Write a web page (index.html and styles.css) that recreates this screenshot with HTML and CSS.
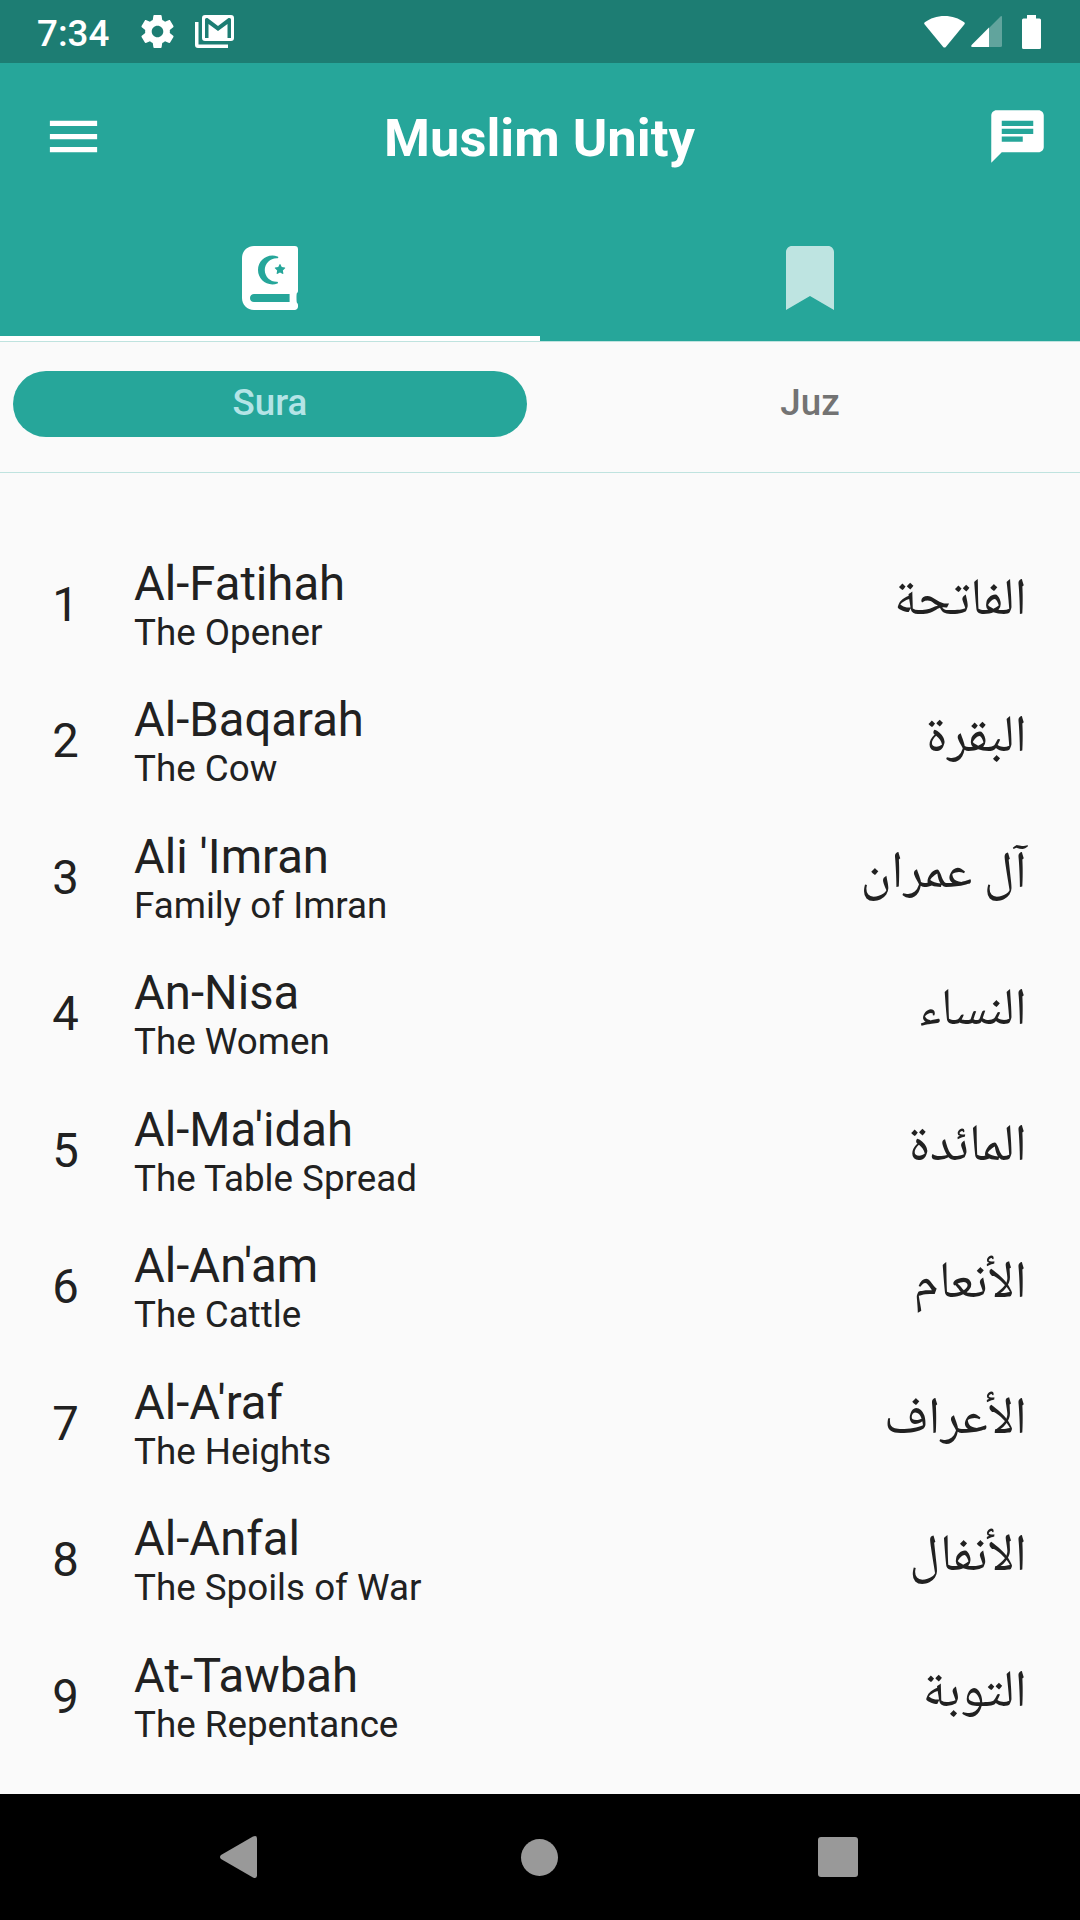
FILE: index.html
```html
<!DOCTYPE html>
<html lang="en">
<head>
    <meta charset="UTF-8">
    <meta name="viewport" content="width=device-width, initial-scale=1.0">
    <title>Muslim Unity</title>
    <link rel="stylesheet" href="styles.css">
</head>
<body>
    <div class="status-bar">
        <span class="time">7:34</span>
        <svg class="gear" viewBox="2 2 20 20"><path d="M19.43 12.98c.04-.32.07-.64.07-.98s-.03-.66-.07-.98l2.11-1.65c.19-.15.24-.42.12-.64l-2-3.46c-.12-.22-.39-.3-.61-.22l-2.49 1c-.52-.4-1.08-.73-1.69-.98l-.38-2.65C14.46 2.18 14.25 2 14 2h-4c-.25 0-.46.18-.49.42l-.38 2.65c-.61.25-1.17.59-1.69.98l-2.49-1c-.23-.09-.49 0-.61.22l-2 3.46c-.13.22-.07.49.12.64l2.11 1.65c-.04.32-.07.65-.07.98s.03.66.07.98l-2.11 1.65c-.19.15-.24.42-.12.64l2 3.46c.12.22.39.3.61.22l2.49-1c.52.4 1.08.73 1.69.98l.38 2.65c.03.24.24.42.49.42h4c.25 0 .46-.18.49-.42l.38-2.65c.61-.25 1.17-.59 1.69-.98l2.49 1c.23.09.49 0 .61-.22l2-3.46c.12-.22.07-.49-.12-.64l-2.11-1.65zM12 15.5c-1.93 0-3.5-1.57-3.5-3.5s1.57-3.5 3.5-3.5 3.5 1.57 3.5 3.5-1.57 3.5-3.5 3.5z"/></svg>
        <svg class="mail" viewBox="0 0 39 33">
            <path fill-rule="evenodd" d="M10 0h26a3 3 0 0 1 3 3v20a3 3 0 0 1-3 3H10a3 3 0 0 1-3-3V3a3 3 0 0 1 3-3zM10 4.500V23h3.500V9l9.500 7 9.500-7v14H36V4.500q0-1.500-1.500-1.500h-1L23 11 12.500 3h-1Q10 3 10 4.500z"/>
            <path d="M0 7h3.500v22.500H33V33H3a3 3 0 0 1-3-3z"/>
        </svg>
        <div class="status-right">
            <svg class="wifi" viewBox="0 0 41 32"><path d="M.8 6.300C6 2.300 13 0 20.500 0S35 2.300 40.200 6.300q1 .9.300 2L22 30.700q-1.500 1.700-3 0L.5 8.300q-.7-1.100.3-2z"/></svg>
            <svg class="signal" viewBox="0 0 31 31">
                <path class="dim" d="M18 12 29.500.5Q31-.5 31 1v28.500Q31 31 29.500 31H18z"/>
                <path d="M18 11.500V31H1.500Q-.7 31 .6 29z"/>
            </svg>
            <svg class="battery" viewBox="0 0 19 34"><path d="M5 0h9v3.500h3.500A1.500 1.500 0 0 1 19 5v27.500a1.500 1.500 0 0 1-1.500 1.500h-16A1.500 1.500 0 0 1 0 32.500V5a1.500 1.500 0 0 1 1.500-1.500H5z"/></svg>
        </div>
    </div>
    <header class="app-bar">
        <svg class="icon" viewBox="0 0 24 24"><path d="M3 18h18v-2H3v2zm0-5h18v-2H3v2zm0-7v2h18V6H3z"/></svg>
        <h1 class="title">Muslim Unity</h1>
        <svg class="icon" viewBox="0 0 24 24"><path d="M20 2H4c-1.100 0-1.990.9-1.990 2L2 22l4-4h14c1.100 0 2-.9 2-2V4c0-1.100-.9-2-2-2zM6 9h12v2H6V9zm8 5H6v-2h8v2zm4-6H6V6h12v2z"/></svg>
    </header>
    <nav class="tabs">
        <div class="tab active">
            <svg class="book" viewBox="0 0 448 512"><path d="M448 358.400V25.600c0-16-9.600-25.600-25.600-25.600H96C41.600 0 0 41.600 0 96v320c0 54.400 41.600 96 96 96h326.400c12.800 0 25.600-9.600 25.600-25.600v-16c0-6.400-3.200-12.800-9.600-19.200-3.200-16-3.200-60.800 0-73.600 6.400-3.200 9.600-9.600 9.600-19.200zM301.080 145.820c.6-1.210 1.760-1.820 2.920-1.820s2.320.61 2.920 1.820l11.180 22.650 25 3.630c2.670.39 3.740 3.670 1.810 5.560l-18.090 17.630 4.270 24.890c.36 2.110-1.310 3.820-3.210 3.820-.5 0-1.020-.12-1.520-.38L304 211.870l-22.360 11.750c-.5.26-1.020.38-1.520.38-1.900 0-3.570-1.710-3.210-3.820l4.270-24.890-18.090-17.630c-1.940-1.890-.87-5.170 1.810-5.560l24.990-3.630 11.190-22.650zm-57.890-69.010c13.670 0 27.260 2.490 40.380 7.410a6.775 6.775 0 1 1-2.380 13.120c-.67 0-3.090-.21-4.130-.21-52.310 0-94.860 42.550-94.860 94.860 0 52.300 42.550 94.860 94.860 94.860 1.030 0 3.480-.21 4.130-.21 3.930 0 6.800 3.140 6.800 6.780 0 2.980-1.940 5.510-4.620 6.420-13.070 4.870-26.590 7.340-40.190 7.340C179.670 307.190 128 255.510 128 192c0-63.520 51.670-115.190 115.190-115.190zM380.800 448H96c-19.200 0-32-12.800-32-32s16-32 32-32h284.800v64z"/></svg>
        </div>
        <div class="tab">
            <svg class="bookmark" viewBox="0 0 384 512"><path d="M0 512V48C0 21.490 21.490 0 48 0h288c26.510 0 48 21.490 48 48v464L192 400 0 512z"/></svg>
        </div>
    </nav>
    <div class="switch">
        <div class="option selected">Sura</div>
        <div class="option">Juz</div>
    </div>
    <main class="list">
        <div class="row">
            <span class="number">1</span>
            <div class="names"><p class="name">Al-Fatihah</p><p class="meaning">The Opener</p></div>
            <span class="arabic" lang="ar" dir="rtl">الفاتحة</span>
        </div>
        <div class="row">
            <span class="number">2</span>
            <div class="names"><p class="name">Al-Baqarah</p><p class="meaning">The Cow</p></div>
            <span class="arabic" lang="ar" dir="rtl">البقرة</span>
        </div>
        <div class="row">
            <span class="number">3</span>
            <div class="names"><p class="name">Ali 'Imran</p><p class="meaning">Family of Imran</p></div>
            <span class="arabic" lang="ar" dir="rtl">آل عمران</span>
        </div>
        <div class="row">
            <span class="number">4</span>
            <div class="names"><p class="name">An-Nisa</p><p class="meaning">The Women</p></div>
            <span class="arabic" lang="ar" dir="rtl">النساء</span>
        </div>
        <div class="row">
            <span class="number">5</span>
            <div class="names"><p class="name">Al-Ma'idah</p><p class="meaning">The Table Spread</p></div>
            <span class="arabic" lang="ar" dir="rtl">المائدة</span>
        </div>
        <div class="row">
            <span class="number">6</span>
            <div class="names"><p class="name">Al-An'am</p><p class="meaning">The Cattle</p></div>
            <span class="arabic" lang="ar" dir="rtl">الأنعام</span>
        </div>
        <div class="row">
            <span class="number">7</span>
            <div class="names"><p class="name">Al-A'raf</p><p class="meaning">The Heights</p></div>
            <span class="arabic" lang="ar" dir="rtl">الأعراف</span>
        </div>
        <div class="row">
            <span class="number">8</span>
            <div class="names"><p class="name">Al-Anfal</p><p class="meaning">The Spoils of War</p></div>
            <span class="arabic" lang="ar" dir="rtl">الأنفال</span>
        </div>
        <div class="row">
            <span class="number">9</span>
            <div class="names"><p class="name">At-Tawbah</p><p class="meaning">The Repentance</p></div>
            <span class="arabic" lang="ar" dir="rtl">التوبة</span>
        </div>
    </main>
    <footer class="nav-bar">
        <svg class="back" viewBox="0 0 37 42"><path d="M1 19 33 .6Q37-1 37 2.500v37Q37 43 33 41.400L1 23q-2-2 0-4z"/></svg>
        <div class="home"></div>
        <div class="recent"></div>
    </footer>
</body>
</html>
```

FILE: styles.css
```css
* {
    box-sizing: border-box;
}
body {
    margin: 0;
    width: 1080px;
    height: 1920px;
    display: flex;
    flex-direction: column;
    overflow: hidden;
    background-color: #fafafa;
    color: #212121;
    font-family: Roboto, sans-serif;
}
p, h1 {
    margin: 0;
}
svg {
    display: block;
    flex: none;
    fill: #fff;
}

/* Status bar */
.status-bar {
    height: 63px;
    flex: none;
    display: flex;
    align-items: center;
    padding: 0 39px 0 37px;
    background-color: #1d7d73;
    color: #fff;
}
.time {
    width: 104px;
    font-size: 36.75px;
    font-weight: 500;
    padding-top: 3px;
}
.gear {
    width: 33px;
    height: 33px;
}
.mail {
    width: 39px;
    height: 33px;
    margin-left: 21px;
}
.status-right {
    display: flex;
    align-items: center;
    margin-left: auto;
}
.wifi {
    width: 41px;
    height: 32px;
    margin-right: 6px;
}
.signal {
    width: 31px;
    height: 31px;
    margin-right: 20px;
}
.signal .dim {
    opacity: 0.3;
}
.battery {
    width: 19px;
    height: 34px;
}

/* App bar */
.app-bar {
    height: 147px;
    flex: none;
    display: flex;
    align-items: center;
    padding: 0 31px 0 42px;
    background-color: #26a69a;
}
.icon {
    width: 63px;
    height: 63px;
}
.title {
    flex: 1;
    padding: 2px 12px 0 0;
    text-align: center;
    color: #fff;
    font-size: 52.5px;
    font-weight: 700;
}
.tabs {
    height: 131px;
    flex: none;
    display: flex;
    background-color: #26a69a;
}
.tab {
    flex: 1;
    display: flex;
    justify-content: center;
    padding-top: 36px;
    border-bottom: 5px solid transparent;
}
.tab.active {
    border-bottom-color: #fff;
}
.book {
    width: 56px;
    height: 64px;
}
.bookmark {
    width: 48px;
    height: 64px;
    opacity: 0.7;
}

/* Sura / Juz switch */
.switch {
    height: 132px;
    flex: none;
    display: flex;
    gap: 26px;
    padding: 29px 13px 0;
    border-top: 1px solid #bfe3df;
    border-bottom: 1px solid #bfe3df;
}
.option {
    flex: 1;
    height: 66px;
    border-radius: 33px;
    text-align: center;
    font-size: 36.75px;
    line-height: 63px;
    font-weight: 500;
    color: #737373;
}
.option.selected {
    background-color: #26a69a;
    color: #b4e4e6;
}

/* Sura list */
.list {
    flex: 1;
    padding-top: 63.6px;
}
.row {
    height: 136.5px;
    display: flex;
    align-items: center;
    padding: 0 53px 0 39px;
}
.number {
    width: 53px;
    text-align: center;
    font-size: 47.25px;
}
.names {
    flex: 1;
    padding-left: 42px;
}
.name {
    font-size: 47.25px;
    line-height: 56px;
}
.meaning {
    font-size: 36.75px;
    line-height: 42px;
}
.arabic {
    padding-bottom: 4px;
    font-family: "Noto Naskh Arabic", "Noto Naskh Arabic UI", "DejaVu Sans", sans-serif;
    font-size: 52px;
}

/* Navigation bar */
.nav-bar {
    height: 126px;
    flex: none;
    display: flex;
    align-items: center;
    justify-content: space-between;
    padding: 0 222px 0 220px;
    background-color: #000;
}
.back {
    width: 37px;
    height: 42px;
    fill: #999;
}
.home {
    width: 37px;
    height: 37px;
    margin-left: 4px;
    border-radius: 50%;
    background-color: #999;
}
.recent {
    width: 40px;
    height: 40px;
    border-radius: 3px;
    background-color: #999;
}
```
